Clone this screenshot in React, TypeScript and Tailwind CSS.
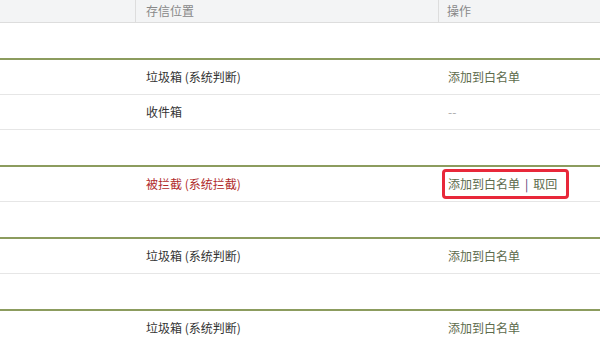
type Row = {
  location: string;
  blocked?: boolean;
  action: "whitelist" | "none" | "recall";
};

const groups: Row[][] = [
  [
    { location: "垃圾箱 (系统判断)", action: "whitelist" },
    { location: "收件箱", action: "none" },
  ],
  [{ location: "被拦截 (系统拦截)", blocked: true, action: "recall" }],
  [{ location: "垃圾箱 (系统判断)", action: "whitelist" }],
  [{ location: "垃圾箱 (系统判断)", action: "whitelist" }],
];

const ActionCell = ({ action }: { action: Row["action"] }) => {
  if (action === "none") {
    return <span className="pl-[9px] text-[#aaaaaa]">--</span>;
  }
  if (action === "recall") {
    return (
      <span className="ml-[3px] flex items-center rounded-[4px] border-[3px] border-[#e8283a] py-[4px] pl-[3px] pr-[9px] leading-[16px] text-[#5d6b4c]">
        添加到白名单
        <span className="mx-[5px] text-[#4a3570]">|</span>
        取回
      </span>
    );
  }
  return <span className="pl-[9px] text-[#5d6b4c]">添加到白名单</span>;
};

export default function App() {
  return (
    <div
      className="h-[340px] w-[600px] overflow-hidden bg-white text-[12px] text-[#333333]"
      style={{ fontFamily: '"Noto Sans CJK SC", "Noto Sans", sans-serif' }}
    >
      {/* header */}
      <div className="grid h-[23px] grid-cols-[136px_303px_1fr] border-b border-[#dddddd] bg-[#f3f4f5] text-[#888888]">
        <div className="border-r border-[#dddddd]" />
        <div className="flex items-center border-r border-[#dddddd] pl-[10px]">存信位置</div>
        <div className="flex items-center pl-[8px]">操作</div>
      </div>

      {groups.map((rows, gi) => (
        <div key={gi}>
          <div className="h-[35px]" />
          <div className="border-t-2 border-[#8c9c5e]">
            {rows.map((row, ri) => (
              <div
                key={ri}
                className="grid h-[35px] grid-cols-[136px_303px_1fr] border-b border-[#e6e6e6]"
              >
                <div />
                <div
                  className={
                    row.blocked
                      ? "flex items-center pl-[10px] text-[#b02a2a]"
                      : "flex items-center pl-[10px]"
                  }
                >
                  {row.location}
                </div>
                <div className="flex items-center">
                  <ActionCell action={row.action} />
                </div>
              </div>
            ))}
          </div>
        </div>
      ))}
    </div>
  );
}
